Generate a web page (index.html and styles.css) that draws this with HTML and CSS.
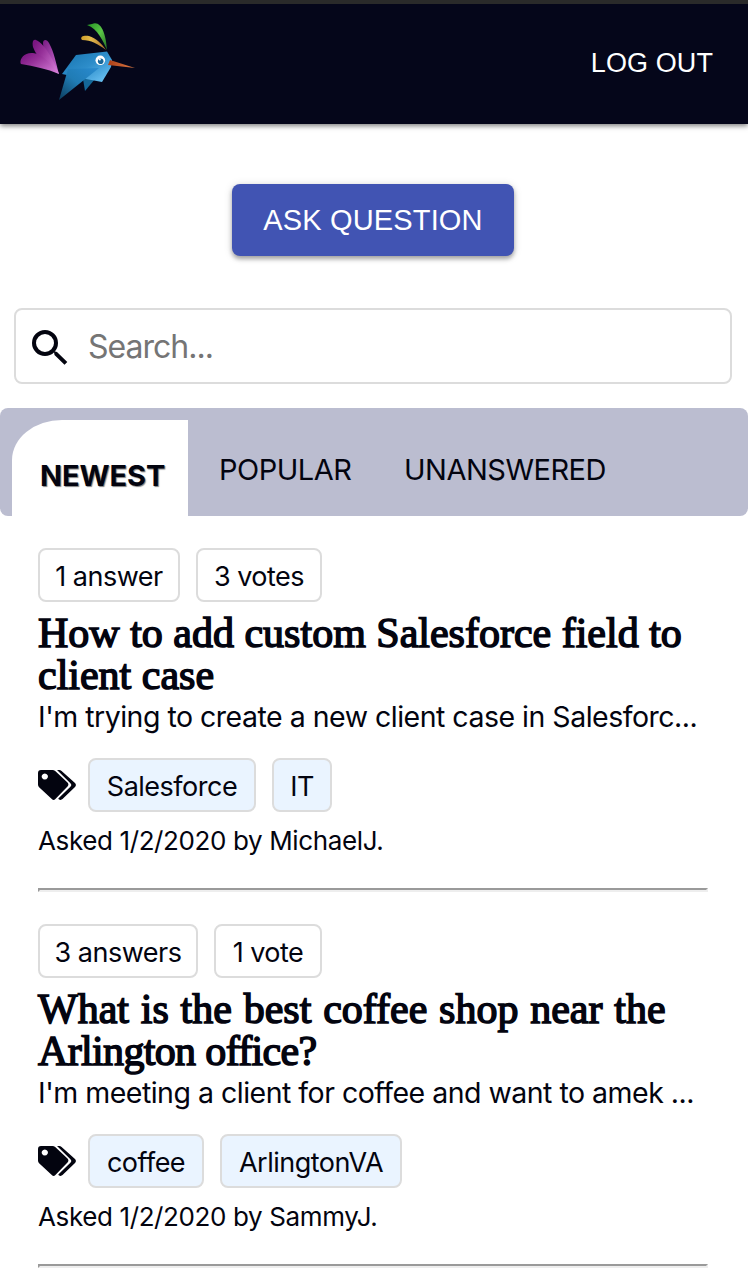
FILE: index.html
```html
<!DOCTYPE html>
<html lang="en">
<head>
<meta charset="utf-8">
<title>Questions</title>
<link rel="stylesheet" href="styles.css">
</head>
<body>
<svg width="0" height="0" class="defs">
  <symbol id="tags" viewBox="0 0 38 30">
    <path fill-rule="evenodd" d="M3 0H14.500Q16 0 17.200 1.100L29.500 12.600Q31.300 14.500 29.500 16.400L17.400 29Q15.600 30.800 13.800 29L1.100 17.200Q0 16 0 14.500V3Q0 0 3 0ZM6.800 3.400a3.100 3.100 0 1 0 .01 0Z"/>
    <path d="M19 0H21.300Q22.500 0 23.600 1.100L37 13Q38.800 15 37 17L24.500 29.100Q22.800 30.700 20.700 29.200L20.300 28.600L32.400 16.700Q34.200 15 32.400 13.200Z"/>
  </symbol>
</svg>
<header class="topbar">
  <svg class="logo" width="116" height="80" viewBox="20 22 116 80" aria-label="Hummingbird">
    <defs>
      <linearGradient id="tail" x1="0" y1="0.2" x2="1" y2="1"><stop offset="0" stop-color="#7b1681"/><stop offset=".3" stop-color="#963199"/><stop offset="1" stop-color="#dc86df"/></linearGradient>
      <linearGradient id="feather" x1="0" y1="0" x2="1" y2="1"><stop offset="0" stop-color="#791b83"/><stop offset="1" stop-color="#cf73d5"/></linearGradient>
      <linearGradient id="body" x1="0" y1="0" x2="1" y2="1"><stop offset="0" stop-color="#1672ad"/><stop offset=".5" stop-color="#2d8dca"/><stop offset="1" stop-color="#76cbfa"/></linearGradient>
      <linearGradient id="wing" x1="1" y1="0" x2="0" y2="1"><stop offset="0" stop-color="#298bd0"/><stop offset=".5" stop-color="#207cb5"/><stop offset="1" stop-color="#0c3c5b"/></linearGradient>
      <linearGradient id="green" x1="0" y1="0" x2="1" y2="1"><stop offset="0" stop-color="#249223"/><stop offset=".5" stop-color="#5bc546"/><stop offset="1" stop-color="#216d20"/></linearGradient>
      <linearGradient id="gold"><stop offset="0" stop-color="#cf9d28"/><stop offset=".4" stop-color="#e3bb4e"/><stop offset="1" stop-color="#a96b28"/></linearGradient>
      <linearGradient id="beak"><stop offset="0" stop-color="#ad3f16"/><stop offset="1" stop-color="#dd7b46"/></linearGradient>
    </defs>
    <path fill="url(#feather)" d="M43 43C43 39 47 39 49 43C54 52 56 63 59 74C52 66 43 55 43 43Z"/>
    <path fill="url(#tail)" d="M33 47C32 42 33 39 36 40C44 43 53 59 59 74Q39 63 33 47Z"/>
    <path fill="url(#tail)" d="M21 64C19 62 22 52 33 53C43 54 51 64 59 74C47 69 34 66 21 64Z"/>
    <path fill="#146798" d="M83 79L95 79L85 91Z"/>
    <path fill="url(#body)" d="M76 55L107 51.500L112 60L111 67L102 82L86 79L62 74Z"/>
    <path fill="url(#wing)" d="M68 69L99 68L59 100Z"/>
    <path fill="url(#green)" d="M87 25L92 24C101 20 106 34 107 50C103 41 98 29 87 25Z"/>
    <path fill="url(#gold)" d="M82 40C79 36 85 35 89 36C96 38 102 44 106 50C98 44 91 40 82 40Z"/>
    <circle cx="100.300" cy="60.300" r="4.800" fill="#fff"/><circle cx="100.700" cy="61.200" r="2.800" fill="#19689a"/><circle cx="99.800" cy="59.500" r="1.100" fill="#fff"/>
    <path fill="url(#beak)" d="M110 60L135 68L108 65Z"/>
  </svg>
  <span class="logout">LOG OUT</span>
</header>
<main>
  <button class="ask">ASK QUESTION</button>
  <div class="search">
    <svg width="36" height="36" viewBox="0 0 36 36"><circle cx="13" cy="13" r="11" fill="none" stroke="#03040f" stroke-width="4"/><path d="M21.500 21L25 22L35.300 32L32.500 34.800L22.500 25L22 22Z" fill="#03040f"/></svg>
    <span>Search...</span>
  </div>
  <nav class="tabs"><span class="tab active">NEWEST</span><span class="tab popular">POPULAR</span><span class="tab unanswered">UNANSWERED</span></nav>
  <section class="list">
    <article>
      <div class="chips"><span class="chip w142">1 answer</span><span class="chip w126">3 votes</span></div>
      <h2><span class="t1">How to add custom Salesforce field to</span> <span class="t2">client case</span></h2>
      <p class="desc">I'm trying to create a new client case in Salesforc...</p>
      <div class="chips tags"><svg width="38" height="30"><use href="#tags"/></svg><span class="chip tag w168">Salesforce</span><span class="chip tag w60">IT</span></div>
      <p class="asked">Asked 1/2/2020 by MichaelJ.</p>
    </article>
    <hr>
    <article>
      <div class="chips"><span class="chip w160">3 answers</span><span class="chip w108">1 vote</span></div>
      <h2><span class="t3">What is the best coffee shop near the</span> <span class="t4">Arlington office?</span></h2>
      <p class="desc">I'm meeting a client for coffee and want to amek ...</p>
      <div class="chips tags"><svg width="38" height="30"><use href="#tags"/></svg><span class="chip tag w116">coffee</span><span class="chip tag w182">ArlingtonVA</span></div>
      <p class="asked">Asked 1/2/2020 by SammyJ.</p>
    </article>
    <hr>
  </section>
</main>
</body>
</html>
```
FILE: styles.css
```css
* { box-sizing: border-box; }
body { margin: 0; background: #fff; color: #03040f; font-family: Inter, "Liberation Sans", sans-serif; height: 1284px; overflow: hidden; }
.defs { position: absolute; }
.topbar { height: 124px; border-top: 4px solid #2a2a2a; background: #05061a; display: flex; justify-content: space-between; align-items: flex-start; padding: 18px 35px 0 20px; box-shadow: 0 2px 5px rgba(0,0,0,.5); }
.logo { display: block; }
.logout { color: #fff; font: 27px/36px "Liberation Sans", sans-serif; letter-spacing: .1px; padding-top: 23px; }
main { display: flex; flex-direction: column; }
.ask { align-self: center; margin: 60px 2px 0 0; width: 282px; height: 72px; border: 0; border-radius: 8px; background: #4154b3; color: #fff; font: 29px/72px "Liberation Sans", sans-serif; letter-spacing: .15px; padding: 0; box-shadow: 0 3px 4px rgba(0,0,0,.3), 0 1px 8px rgba(0,0,0,.15); }
.search { margin: 52px 16px 0 14px; height: 76px; border: 2px solid #dcdcdc; border-radius: 8px; display: flex; align-items: center; padding-left: 16px; gap: 20px; font-size: 32px; letter-spacing: -1px; color: #757575; }
.search svg { margin-top: 4px; }
.tabs { margin-top: 24px; height: 108px; border-radius: 8px; background: #bbbdd0; display: flex; padding: 12px 0 0 12px; font-size: 29px; letter-spacing: -.5px; line-height: 36px; white-space: nowrap; }
.tab { padding-top: 32px; }
.active { width: 176px; background: #fff; border-top-left-radius: 50px 40px; padding: 38px 0 0 28px; font-weight: 700; letter-spacing: -.1px; text-shadow: 1px 1px 1px rgba(0,0,0,.5); }
.popular { margin-left: 31px; width: 185px; }
.list { padding: 32px 40px 0 38px; }
article { height: 340px; }
.chips { display: flex; gap: 16px; align-items: center; height: 54px; }
.chip { height: 54px; border: 2px solid #dcdcdc; border-radius: 8px; text-align: center; font-size: 27px; line-height: 54px; letter-spacing: -.5px; white-space: nowrap; }
.tag { background: #eaf4ff; }
.tags { margin-top: 22px; }
.tags svg { margin-right: -4px; fill: #03040f; }
.w142 { width: 142px; } .w126 { width: 126px; } .w168 { width: 168px; } .w60 { width: 60px; }
.w160 { width: 160px; } .w108 { width: 108px; } .w116 { width: 116px; } .w182 { width: 182px; }
h2 { margin: 10px 0 0; font: 400 42px/42px "Liberation Serif", serif; -webkit-text-stroke: 1.5px #03040f; }
h2 span { display: block; white-space: nowrap; }
.t3 { word-spacing: 1.3px; }
.t4 { letter-spacing: -.65px; font-feature-settings: "liga" 1; }
.desc { margin: 1px 0 0; font-size: 28.5px; line-height: 39px; letter-spacing: -.5px; white-space: nowrap; }
.asked { margin: 10px 0 0; font-size: 26px; line-height: 38px; letter-spacing: -.38px; white-space: nowrap; }
hr { margin: 0 0 32px; height: 4px; border: 2px solid; border-color: #9a9a9a #eee #eee #9a9a9a; }
```
